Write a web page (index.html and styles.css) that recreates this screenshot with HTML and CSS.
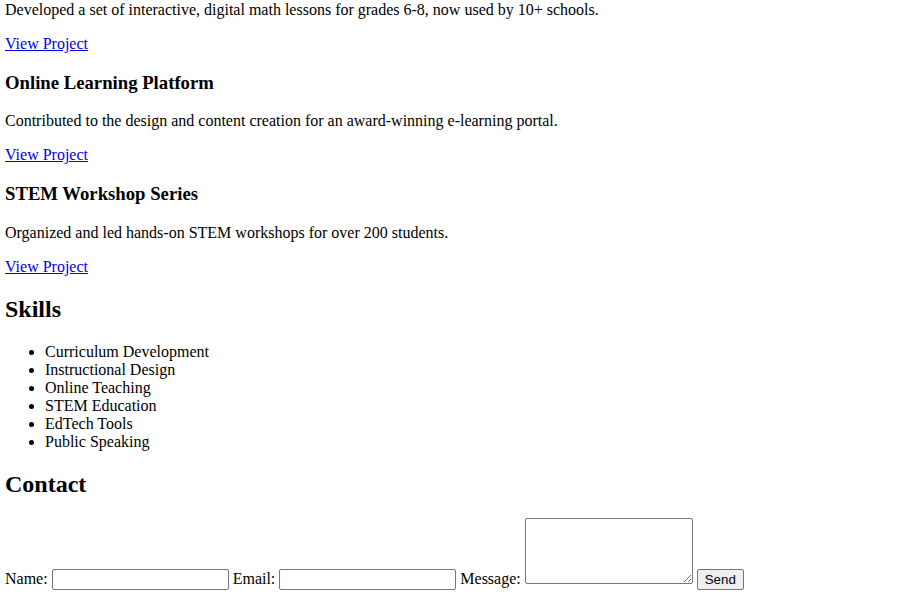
FILE: index.html
```html
<!DOCTYPE html>
<html lang="en">
<head>
<meta charset="utf-8">
<title>Portfolio</title>
<link rel="stylesheet" href="styles.css">
</head>
<body>
<section class="projects">
  <div class="project">
    <p class="first">Developed a set of interactive, digital math lessons for grades 6-8, now used by 10+ schools.</p>
    <p><a href="#">View Project</a></p>
  </div>
  <div class="project">
    <h3>Online Learning Platform</h3>
    <p>Contributed to the design and content creation for an award-winning e-learning portal.</p>
    <p><a href="#">View Project</a></p>
  </div>
  <div class="project">
    <h3>STEM Workshop Series</h3>
    <p>Organized and led hands-on STEM workshops for over 200 students.</p>
    <p><a href="#">View Project</a></p>
  </div>
</section>
<section class="skills">
  <h2>Skills</h2>
  <ul>
    <li>Curriculum Development</li>
    <li>Instructional Design</li>
    <li>Online Teaching</li>
    <li>STEM Education</li>
    <li>EdTech Tools</li>
    <li>Public Speaking</li>
  </ul>
</section>
<section class="contact">
  <h2>Contact</h2>
  <form class="contact-form">
    <label for="name">Name:</label>
    <input type="text" id="name" class="field">
    <label for="email">Email:</label>
    <input type="email" id="email" class="field">
    <label for="msg">Message:</label>
    <textarea id="msg" class="message" rows="4"></textarea>
    <button type="button" class="send">Send</button>
  </form>
</section>
</body>
</html>
```
FILE: styles.css
```css
html, body {
  font-family: "Liberation Serif", "Times New Roman", serif;
  font-size: 16px;
  color: #000;
  background: #fff;
}
body {
  margin: 1px 8px 8px 5px;
}
p.first {
  margin-top: 0;
}
a {
  color: #0000ee;
}
.field {
  box-sizing: border-box;
  width: 177px;
  height: 21px;
  border: 1px solid #767676;
  border-radius: 2px;
  padding: 1px 2px;
  font-family: "Liberation Sans", Arial, sans-serif;
  font-size: 13.33px;
}
.message {
  box-sizing: border-box;
  width: 168px;
  height: 66px;
  border: 1px solid #767676;
  border-radius: 2px;
  padding: 2px;
  font-family: "Liberation Mono", monospace;
  font-size: 13.33px;
}
.send {
  box-sizing: border-box;
  width: 47px;
  height: 21px;
  border: 1px solid #767676;
  border-radius: 2px;
  background: #efefef;
  padding: 1px 6px;
  font-family: "Liberation Sans", Arial, sans-serif;
  font-size: 13.33px;
  color: #000;
}
```
